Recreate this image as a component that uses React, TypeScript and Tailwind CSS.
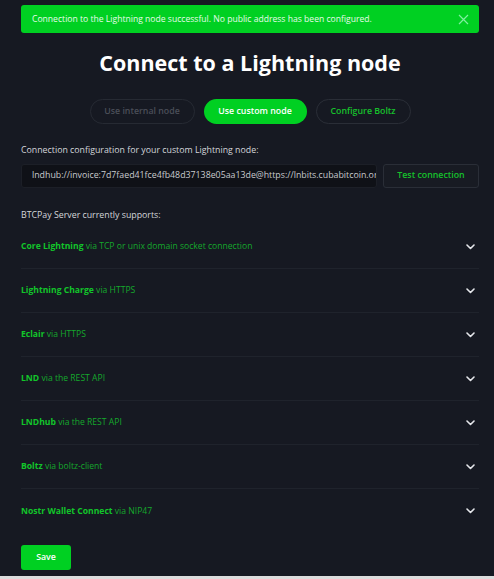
import React from "react";

const rows: [string, string][] = [
  ["Core Lightning", "via TCP or unix domain socket connection"],
  ["Lightning Charge", "via HTTPS"],
  ["Eclair", "via HTTPS"],
  ["LND", "via the REST API"],
  ["LNDhub", "via the REST API"],
  ["Boltz", "via boltz-client"],
  ["Nostr Wallet Connect", "via NIP47"],
];

function Chevron() {
  return (
    <svg width="9" height="6" viewBox="0 0 9 6" fill="none">
      <path d="M1 1l3.5 3.5L8 1" stroke="#e5e7eb" strokeWidth="1.6" strokeLinecap="round" strokeLinejoin="round" />
    </svg>
  );
}

export default function App() {
  return (
    <div style={{ fontFamily: '"Open Sans", "Noto Sans", sans-serif' }}>
      <div className="h-[576px] bg-[#161922] pl-[21px] pr-[15px] pt-[5px] overflow-hidden">
        <div className="flex h-[28px] items-center justify-between rounded-[3px] bg-[#00d022] pl-[11px] pr-[10px]">
          <span className="text-[8.6px] text-[#e6fbe9]">
            Connection to the Lightning node successful. No public address has been configured.
          </span>
          <svg width="11" height="11" viewBox="0 0 11 11">
            <path d="M1 1l9 9M10 1l-9 9" stroke="#7ff0a0" strokeWidth="1.2" />
          </svg>
        </div>
        <h1 className="mt-[14px] text-center text-[21.5px] font-bold leading-[32px] text-white">
          Connect to a Lightning node
        </h1>
        <div className="mt-[20px] flex justify-center gap-[9px]">
          <div className="flex h-[25px] w-[105px] items-center justify-center rounded-full border border-[#262a33] text-[8.8px] font-semibold text-[#4a4e58]">
            Use internal node
          </div>
          <div className="flex h-[25px] w-[103px] items-center justify-center rounded-full bg-[#00d022] text-[8.8px] font-semibold text-white">
            Use custom node
          </div>
          <div className="flex h-[25px] w-[95px] items-center justify-center rounded-full border border-[#2a2e37] text-[8.8px] font-semibold text-[#16c12c]">
            Configure Boltz
          </div>
        </div>
        <div className="mt-[20px] text-[8.8px] leading-[12px] text-[#d4d6da]">
          Connection configuration for your custom Lightning node:
        </div>
        <div className="mt-[8px] flex gap-[6px]">
          <div className="flex h-[24px] w-[356px] items-center overflow-hidden whitespace-nowrap rounded-[3px] border border-[#1c1f27] bg-[#0f1117] pl-[10px] text-[8.8px] text-[#c8cace]">
            lndhub://invoice:7d7faed41fce4fb48d37138e05aa13de@https://lnbits.cubabitcoin.org
          </div>
          <div className="flex h-[24px] flex-1 items-center justify-center rounded-[3px] border border-[#2a2e37] bg-[#181b23] text-[8.8px] font-semibold text-[#16c12c]">
            Test connection
          </div>
        </div>
        <div className="mt-[21px] text-[8.8px] leading-[12px] text-[#d4d6da]">
          BTCPay Server currently supports:
        </div>
        <div className="mt-[4px]">
          {rows.map(([name, via], i) => (
            <div
              key={name}
              className={`flex h-[44px] items-center justify-between pr-[4px] ${i < rows.length - 1 ? "border-b border-[#1f232c]" : ""}`}
            >
              <span className="text-[8.6px] text-[#15a82c]">
                <span className="font-bold text-[#12c52a]">{name}</span> {via}
              </span>
              <Chevron />
            </div>
          ))}
        </div>
        <div className="mt-[12px] flex h-[25px] w-[50px] items-center justify-center rounded-[3px] bg-[#00d022] text-[8.8px] font-semibold text-white">
          Save
        </div>
      </div>
      <div className="h-[3px] bg-[#dcdcdc]" />
    </div>
  );
}
